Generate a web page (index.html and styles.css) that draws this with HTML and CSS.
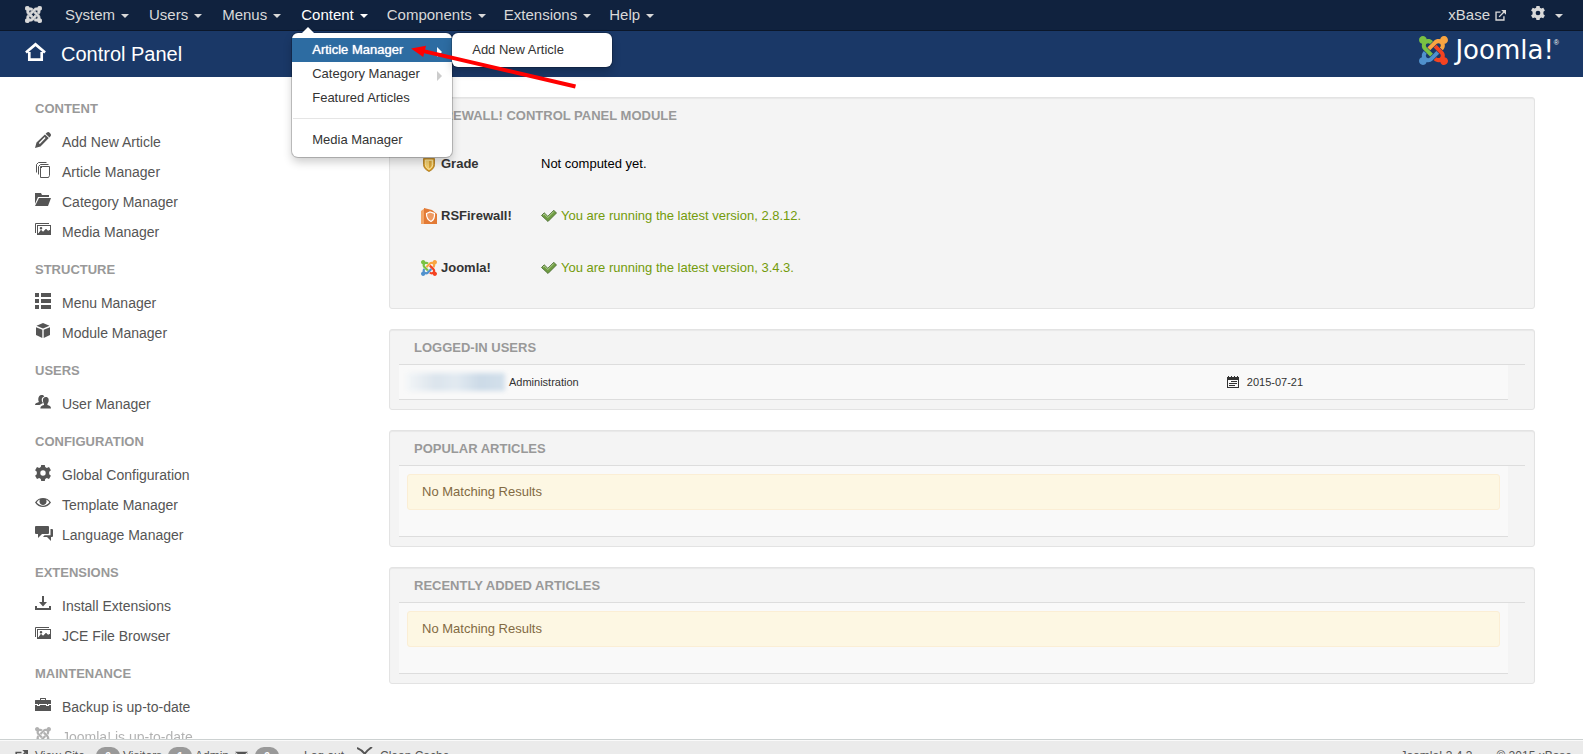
FILE: index.html
```html
<!DOCTYPE html>
<html lang="en">
<head>
<meta charset="utf-8">
<title>Control Panel</title>
<link rel="stylesheet" href="styles.css">
</head>
<body>
<svg class="defs" aria-hidden="true">
  <symbol id="joomla" viewBox="0 32 448 448">
    <path class="j1" d="M.6 92.1C.6 58.8 27.4 32 60.4 32c30 0 54.5 21.9 59.2 50.2 32.6-7.6 67.1.6 96.5 30l-44.3 44.3c-20.5-20.5-42.6-16.3-55.4-3.5-14.3 14.3-14.3 37.9 0 52.2l99.5 99.5-44 44.3c-87.7-87.2-49.7-49.7-99.8-99.7-26.8-26.5-35-64.8-24.8-98.9C20.4 144.6.6 120.7.6 92.1z"/>
    <path class="j2" d="M130.1 208.500l44.300 44.300c10-10 89.700-89.700 99.700-99.800 14.300-14.300 37.600-14.300 51.900 0 12.800 12.800 17 35-3.500 55.400l44 44.300c31.200-31.200 38.500-67.600 28.900-101.200 29.200-4.100 51.900-29.200 51.900-59.500 0-33.200-26.800-60.100-59.800-60.100-30.300 0-55.400 22.500-59.500 51.600-33.800-9.900-71.700-1.500-98.300 25.100-18.300 19.100-71.100 71.500-99.600 99.900z"/>
    <path class="j3" d="M396.400 360.700c8.200-32.700-.9-68.500-26.300-93.900-11.800-12.200 5 4.700-99.500-99.700l-44.300 44.300 99.700 99.700c14.300 14.300 14.300 37.600 0 51.900-12.800 12.800-35 17-55.400-3.500l-44 44.300c27.600 30.200 68 38.800 102.700 28 5.500 27.400 29.700 48.100 58.900 48.100 33 0 59.800-26.800 59.800-60.100 0-30.200-22.500-55-51.600-59.100z"/>
    <path class="j4" d="M312.100 307.600l-44-44.300c-87 86.400-50.400 50.400-99.700 99.800-14.300 14.300-37.600 14.300-51.900 0-13.100-13.400-16.900-35.300 3.200-55.400l-44-44.300c-30.200 30.200-38 65.200-29.500 98.300-26.700 6-46.200 29.900-46.200 58.200C0 453.200 26.800 480 59.800 480c28.600 0 52.500-19.800 58.600-46.700 32.700 8.200 68.500-.6 94.200-26 32.100-32 12.200-12.400 99.500-99.700z"/>
  </symbol>
  <symbol id="gear" viewBox="0 0 16 16"><path fill-rule="evenodd" d="M6.200 0h3.600l.4 2 1.600.9 2.200-.8 1.900 3.100-1.700 1.500v2.600l1.700 1.500-1.900 3.100-2.200-.8-1.600.9-.4 2H6.200l-.4-2-1.600-.9-2.200.8-1.900-3.100 1.700-1.500V6.700L.1 5.200 2 2.100l2.200.8 1.600-.9zM8 5.300a2.700 2.700 0 1 0 0 5.400 2.700 2.700 0 0 0 0-5.400z"/></symbol>
  <symbol id="pencil" viewBox="0 0 16 16"><path fill-rule="evenodd" d="M12 .5q1.400-1 2.900.4 1.700 1.600.8 3L14.500 5.400 10.600 1.700zM9.900 2.400l3.900 3.700-8.300 8.300L0 16l1.500-5.500zM9.600 5.100l-5.800 5.900 1 1 5.800-5.900z"/></symbol>
  <symbol id="copies" viewBox="0 0 16 16"><path fill="none" stroke="currentColor" d="M7.500 4.500h7v9l-1 2h-8v-9zM3.500 12.500v-8l2-2h8M1.500 10.500v-8l2-2h8M5.500 6.500v-2h2"/></symbol>
  <symbol id="folder" viewBox="0 0 16 16"><path d="M0 1h6l1 2h7v2H3L0 12zM4 6h12l-3 8H0z"/></symbol>
  <symbol id="images" viewBox="0 0 16 16"><path fill="none" stroke="currentColor" d="M.5 11V1.500H14"/><path fill-rule="evenodd" d="M2 3h14v10H2zm1 1v7.500h.5L6 8l2 2 3-3 2 2 2-1V4zm3 1a1.300 1.300 0 1 1 0 2.600A1.300 1.300 0 0 1 6 5z"/><path d="M3 12l3-4 2 2 3-3 2 2 2-1v4z"/></symbol>
  <symbol id="list" viewBox="0 0 16 16"><path d="M0 0h4v4H0zM6 0h10v4H6zM0 6h4v4H0zM6 6h10v4H6zM0 12h4v4H0zM6 12h10v4H6z"/></symbol>
  <symbol id="cube" viewBox="0 0 16 16"><path d="M8 0l6.500 2.700L8 5.500 1.500 2.700zM1 4.200l6.300 2.600V15L1 12zM15 4.200V12l-6.300 3V6.800z"/></symbol>
  <symbol id="users" viewBox="0 0 16 16"><path d="M6 1c2-.3 3 .5 3.300 1.500C7 3 6.300 5 7 7.500l1 1.500-3.500 2H0c.2-1.500 1-2 4-3-1-1.500-1.300-6 2-7z"/><path d="M10.700 3c3 0 3.400 2.500 2.800 4.800L12.400 10v1c2.500.7 3.500 1.300 3.600 3.500H5.400c0-2.200 1.100-2.800 3.600-3.500v-1C7.500 7.500 7.300 3 10.700 3z"/></symbol>
  <symbol id="eye" viewBox="0 0 16 16"><path fill-rule="evenodd" d="M0 7.500C2 4.300 5 3 8 3s6 1.300 8 4.500C14 10.700 11 12 8 12S2 10.700 0 7.500zm1.700 0c1.500 2 4 3.200 6.300 3.200s4.800-1.200 6.300-3.200C13.500 6 12 5 11 4.600c1.600 3-.5 5.300-3 5.300S3.500 7.600 5 4.600C3.700 5 2.500 6.200 1.700 7.500z"/><circle cx="8.200" cy="6.700" r="2.700"/></symbol>
  <symbol id="chat" viewBox="0 0 18 16"><path d="M1 1h12q1 0 1 1v6q0 1-1 1H7l-4 4V9H1Q0 9 0 8V2q0-1 1-1zM15.500 4H17q1 0 1 1v6q0 1-1 1h-1v4l-4-4H8l1.500-1.700h6z"/></symbol>
  <symbol id="download" viewBox="0 0 16 16"><path d="M7 0h2v6h3l-4 4.500L4 6h3zM0 10h2v2h12v-2h2v4H0z"/></symbol>
  <symbol id="case" viewBox="0 0 16 16"><path fill-rule="evenodd" d="M5 3V1.500Q5 1 5.500 1h5q.5 0 .5.500V3h4.500q.5 0 .5.500V7h-3v1h-1V7H4v1H3V7H0V3.500Q0 3 .5 3zm1 0h4V2H6zM0 8h2v1h3V8h6v1h3V8h2v6H0z"/></symbol>
  <symbol id="external" viewBox="0 0 16 16"><path fill="none" stroke="currentColor" stroke-width="2" d="M8 3H1.500v11.500H13V9M6 10l7-7"/><path d="M9 0h7v7z"/></symbol>
  <symbol id="home" viewBox="0 0 22 20"><path fill="none" stroke="currentColor" stroke-width="2.800" d="M1 10.500L11 2l10 8.500M4.500 10v8h13v-8"/></symbol>
  <symbol id="tick" viewBox="0 0 16 16"><path fill="#6f9c42" stroke="#44652c" stroke-width=".8" d="M.5 7.500l2.700-2.700 3.600 3.500 6-6 2.700 2.700L7 13.500z"/><path fill="none" stroke="#b4d295" d="M2 7.200l1.300-1.200 3.500 3.500 6-6"/></symbol>
  <symbol id="shield" viewBox="0 0 16 16"><path fill="#d79a25" stroke="#a8761c" stroke-width=".8" d="M2.500 2.500h11v6c0 3.500-2.500 5.500-5.500 7-3-1.500-5.500-3.500-5.500-7z"/><path fill="#f3cf70" stroke="#fff0b5" stroke-width=".8" d="M4.300 4h7.400v4.500c0 2.500-1.700 4-3.700 5-2-1-3.700-2.500-3.700-5z"/><path fill="#d9a53a" d="M8 5h2.500v4c0 1.500-1 2.500-2.500 3.300z"/></symbol>
  <symbol id="rsf" viewBox="0 0 16 16"><path fill="#f3a566" d="M0 3l4-3v16H0z"/><path fill="#e27a35" d="M3 0l8 2 5 4v10H3z"/><path fill="#ef9a62" stroke="#fff" stroke-width="1.200" d="M5.500 5.500L9 4l4.500 1.500c.3 4-.5 6.500-3.500 8-3-1.500-4.700-4-4.500-8z"/></symbol>
  <symbol id="calendar" viewBox="0 0 12 12"><path fill-rule="evenodd" d="M0 1h1V0h1v1h2V0h1v1h2V0h1v1h2V0h1v1h1v11H0zm1 3v7h10V4zm3 1h6v1H4zM2 7h8v1H2zm0 2h6v1H2z"/></symbol>
  <symbol id="mail" viewBox="0 0 16 14"><path d="M0 1h16L8 8zM0 3l8 7 8-7v11H0z"/></symbol>
  <symbol id="cross" viewBox="0 0 16 16"><path fill="none" stroke="currentColor" stroke-width="2" d="M0 1c5 2 9 6 12 13M15 0C9 4 6 8 3 14"/></symbol>
</svg>

<header>
  <nav class="topbar" aria-label="Main">
    <a class="brand" href="#" aria-label="Joomla"><svg><use href="#joomla"/></svg></a>
    <ul class="menu">
      <li><a href="#">System<i class="caret"></i></a></li>
      <li><a href="#">Users<i class="caret"></i></a></li>
      <li><a href="#">Menus<i class="caret"></i></a></li>
      <li class="open"><a href="#">Content<i class="caret"></i></a>
        <ul class="dropdown">
          <li class="active"><a href="#">Article Manager<i class="more"></i></a>
            <ul class="submenu"><li><a href="#">Add New Article</a></li></ul>
          </li>
          <li><a href="#">Category Manager<i class="more"></i></a></li>
          <li><a href="#">Featured Articles</a></li>
          <li class="divider"></li>
          <li><a href="#">Media Manager</a></li>
        </ul>
        <svg class="pointer" viewBox="0 0 170 48" aria-hidden="true"><path d="M0 6.500L15 3.700l-.9 3.700L165 42.500l-1 4L13.100 11.300l-.9 3.700z"/></svg>
      </li>
      <li><a href="#">Components<i class="caret"></i></a></li>
      <li><a href="#">Extensions<i class="caret"></i></a></li>
      <li><a href="#">Help<i class="caret"></i></a></li>
    </ul>
    <a class="site" href="#">xBase<svg><use href="#external"/></svg></a>
    <a class="settings" href="#" aria-label="Settings"><svg><use href="#gear"/></svg><i class="caret"></i></a>
  </nav>
  <div class="titlebar">
    <svg class="home"><use href="#home"/></svg>
    <h1>Control Panel</h1>
    <div class="logo"><svg class="colour"><use href="#joomla"/></svg><span>Joomla!</span><sup>®</sup></div>
  </div>
</header>

<main>
  <aside>
    <h2>CONTENT</h2>
    <ul>
      <li><a href="#"><svg><use href="#pencil"/></svg>Add New Article</a></li>
      <li><a href="#"><svg><use href="#copies"/></svg>Article Manager</a></li>
      <li><a href="#"><svg><use href="#folder"/></svg>Category Manager</a></li>
      <li><a href="#"><svg><use href="#images"/></svg>Media Manager</a></li>
    </ul>
    <h2>STRUCTURE</h2>
    <ul>
      <li><a href="#"><svg><use href="#list"/></svg>Menu Manager</a></li>
      <li><a href="#"><svg><use href="#cube"/></svg>Module Manager</a></li>
    </ul>
    <h2>USERS</h2>
    <ul>
      <li><a href="#"><svg><use href="#users"/></svg>User Manager</a></li>
    </ul>
    <h2>CONFIGURATION</h2>
    <ul>
      <li><a href="#"><svg><use href="#gear"/></svg>Global Configuration</a></li>
      <li><a href="#"><svg><use href="#eye"/></svg>Template Manager</a></li>
      <li><a href="#"><svg class="wide"><use href="#chat"/></svg>Language Manager</a></li>
    </ul>
    <h2>EXTENSIONS</h2>
    <ul>
      <li><a href="#"><svg><use href="#download"/></svg>Install Extensions</a></li>
      <li><a href="#"><svg><use href="#images"/></svg>JCE File Browser</a></li>
    </ul>
    <h2>MAINTENANCE</h2>
    <ul>
      <li><a href="#"><svg><use href="#case"/></svg>Backup is up-to-date</a></li>
      <li class="faded"><a href="#"><svg><use href="#joomla"/></svg>Joomla! is up-to-date</a></li>
    </ul>
  </aside>

  <div class="panels">
    <section class="panel firewall">
      <h2>RSFIREWALL! CONTROL PANEL MODULE</h2>
      <table>
        <tr><th scope="row"><span><svg><use href="#shield"/></svg>Grade</span></th><td>Not computed yet.</td></tr>
        <tr><th scope="row"><span><svg><use href="#rsf"/></svg>RSFirewall!</span></th><td class="ok"><span><svg><use href="#tick"/></svg>You are running the latest version, 2.8.12.</span></td></tr>
        <tr><th scope="row"><span><svg class="colour"><use href="#joomla"/></svg>Joomla!</span></th><td class="ok"><span><svg><use href="#tick"/></svg>You are running the latest version, 3.4.3.</span></td></tr>
      </table>
    </section>
    <section class="panel">
      <h2>LOGGED-IN USERS</h2>
      <div class="rows user">
        <div><span class="redacted"></span>Administration</div>
        <div><svg><use href="#calendar"/></svg>2015-07-21</div>
      </div>
    </section>
    <section class="panel">
      <h2>POPULAR ARTICLES</h2>
      <div class="rows"><p class="alert">No Matching Results</p></div>
    </section>
    <section class="panel">
      <h2>RECENTLY ADDED ARTICLES</h2>
      <div class="rows"><p class="alert">No Matching Results</p></div>
    </section>
  </div>
</main>

<footer>
  <a class="view" href="#"><svg><use href="#external"/></svg>View Site</a>
  <b>0</b><span class="visitors">Visitors</span>
  <b>1</b><span class="admin">Admin</span>
  <svg><use href="#mail"/></svg><b>0</b>
  <a class="logout" href="#">Log out</a>
  <a class="cache" href="#"><svg><use href="#cross"/></svg>Clean Cache</a>
  <span class="version">Joomla! 3.4.3</span><span>© 2015 xBase</span>
</footer>
</body>
</html>
```

FILE: styles.css
```css
* { box-sizing: border-box; }
body {
  margin: 0;
  height: 100vh;
  overflow: hidden;
  display: flex;
  flex-direction: column;
  background: #fff;
  color: #333;
  font: 13px/18px "Liberation Sans", Arial, sans-serif;
}
ul { list-style: none; margin: 0; padding: 0; }
a { color: inherit; text-decoration: none; }
h1, h2, p { margin: 0; }
svg { width: 16px; height: 16px; flex: none; fill: currentColor; }
.defs { position: absolute; width: 0; height: 0; }
.colour { --j1: #7ac143; --j2: #f9a541; --j3: #f44321; --j4: #5091cd; }
.j1 { fill: var(--j1, currentColor); }
.j2 { fill: var(--j2, currentColor); }
.j3 { fill: var(--j3, currentColor); }
.j4 { fill: var(--j4, currentColor); }

.topbar {
  display: flex;
  height: 31px;
  padding: 0 20px 0 25px;
  background: #10223e;
  border-bottom: 1px solid #0b172a;
  color: #d9d9d9;
  font-size: 15px;
  line-height: 30px;
}
.brand { display: flex; align-items: center; margin-right: 13px; padding-bottom: 2px; }
.brand svg { width: 17px; height: 17px; stroke: currentColor; stroke-width: 16px; }
.menu { display: flex; flex: 1; }
.menu > li { position: relative; }
.menu > li > a { display: flex; align-items: center; padding: 0 10px; }
.menu > .open > a { color: #fff; }
.menu > .open ~ li > a { padding: 0 9px; }
.caret {
  margin: 2px 0 0 6px;
  border: 4px solid transparent;
  border-top-color: currentColor;
  border-bottom: 0;
}
.site, .settings { display: flex; align-items: center; }
.site svg { width: 11px; height: 11px; margin-left: 5px; }
.settings { margin-left: 25px; }
.settings svg { width: 14px; height: 14px; margin-bottom: 4px; }
.settings .caret { margin-left: 10px; }

.dropdown, .submenu {
  position: absolute;
  z-index: 2;
  width: 160px;
  padding: 5px 0;
  background: #fff;
  border-radius: 6px;
  box-shadow: 0 0 0 1px rgba(0, 0, 0, .2), 0 5px 10px rgba(0, 0, 0, .2);
  color: #333;
  font-size: 13px;
  line-height: 24px;
}
.dropdown { top: 33px; left: 1px; }
.dropdown::before {
  content: "";
  position: absolute;
  top: -6px;
  left: 10px;
  border: 6px solid transparent;
  border-top: 0;
  border-bottom-color: #fff;
}
.dropdown > li { position: relative; }
.dropdown a { display: flex; align-items: center; padding: 0 10px 0 20px; }
.dropdown .active > a { background: #2d6ca2; color: #fff; text-shadow: 0 0 1px #fff; }
.submenu { top: -5px; left: 160px; }
.more {
  margin: 3px 0 0 auto;
  border: 5px solid transparent;
  border-right: 0;
  border-left-color: #ccc;
}
.active .more { border-left-color: #fff; }
.dropdown .divider { height: 1px; margin: 8px 1px 9px; background: #e5e5e5; }
.pointer {
  position: absolute;
  z-index: 3;
  top: 42px;
  left: 120px;
  width: 170px;
  height: 48px;
  fill: #f00;
}

.titlebar {
  display: flex;
  align-items: center;
  height: 46px;
  padding: 0 24px 0 25px;
  background: #1a3867;
  color: #fff;
}
.home { width: 21px; height: 20px; margin: 0 15px 4px 0; }
h1 { flex: 1; font-size: 20px; font-weight: normal; line-height: 46px; }
.logo { display: flex; align-items: center; height: 38px; margin-bottom: 8px; }
.logo svg { width: 29px; height: 29px; margin-right: 7px; }
.logo span { font: 26px/32px "DejaVu Sans", sans-serif; }
.logo sup { align-self: flex-start; font-size: 7px; line-height: 24px; }

main {
  flex: 1;
  min-height: 0;
  overflow: hidden;
  display: grid;
  grid-template-columns: 354fr 1146fr;
  padding: 20px 48px 0 35px;
}
main h2 { font-size: 13px; line-height: 18px; color: #999; }
aside h2 { padding: 3px 0 9px; }
aside ul { margin-bottom: 11px; }
aside a { display: flex; gap: 11px; color: #555; font-size: 14px; line-height: 30px; }
aside svg { margin-top: 5px; }
aside .wide { width: 18px; margin-right: -2px; }
.faded { opacity: .45; }

.panel {
  margin-bottom: 20px;
  padding: 9px 9px;
  background: #f4f4f4;
  border: 1px solid #e3e3e3;
  border-radius: 3px;
  box-shadow: inset 0 1px 1px rgba(0, 0, 0, .05);
}
.panel h2 { padding: 0 15px 7px; border-bottom: 1px solid #ddd; }
.firewall { padding-bottom: 14px; }
.firewall h2 { border: 0; padding-bottom: 13px; }
table { margin-left: 22px; border-collapse: collapse; }
tr { height: 52px; }
th { width: 120px; padding: 0; text-align: left; }
td { padding: 0; color: #000; }
th span, td span { display: flex; align-items: center; gap: 4px; }
.ok { color: #739b0b; }
.rows {
  width: 98.5%;
  padding: 8px 8px 26px;
  background: #f9f9f9;
  border-bottom: 1px solid #ddd;
}
.user { display: grid; grid-template-columns: 75% 25%; padding: 8px; font-size: 11px; }
.user div { display: flex; align-items: center; }
.user svg { width: 12px; height: 12px; margin-right: 8px; }
.redacted {
  width: 98px;
  height: 18px;
  margin: 0 4px 0 0;
  background: linear-gradient(90deg, #f2f5f7, #dbe4ec 30%, #e2eaf1 50%, #ccdae7 75%, #d3e0eb);
  filter: blur(2px);
}
.alert {
  padding: 8px 14px;
  background: #fdf7e3;
  border: 1px solid #fbeed5;
  border-radius: 3px;
  color: #826a42;
}

footer {
  display: flex;
  align-items: flex-start;
  height: 15px;
  overflow: hidden;
  padding: 7px 11px 0 15px;
  background: #ebebeb;
  border-top: 1px solid #ccd1d1;
  box-shadow: inset 0 1px #fafafa;
  color: #555;
  font-size: 12px;
}
footer a, footer span { display: block; white-space: nowrap; }
footer a { display: flex; }
footer svg { width: 13px; height: 13px; margin-top: 3px; }
footer b {
  width: 24px;
  margin-right: 3px;
  border-radius: 9px;
  background: #999;
  color: #fff;
  font-size: 11px;
  text-align: center;
}
.view { gap: 7px; width: 81px; }
.visitors { width: 45px; }
.admin { width: 40px; }
footer > svg { margin-right: 7px; }
.logout { margin-left: 22px; width: 53px; }
.cache svg { width: 16px; height: 16px; margin: 0 7px 0 0; }
.cache { flex: 1; }
.version { margin-right: 24px; }
```
